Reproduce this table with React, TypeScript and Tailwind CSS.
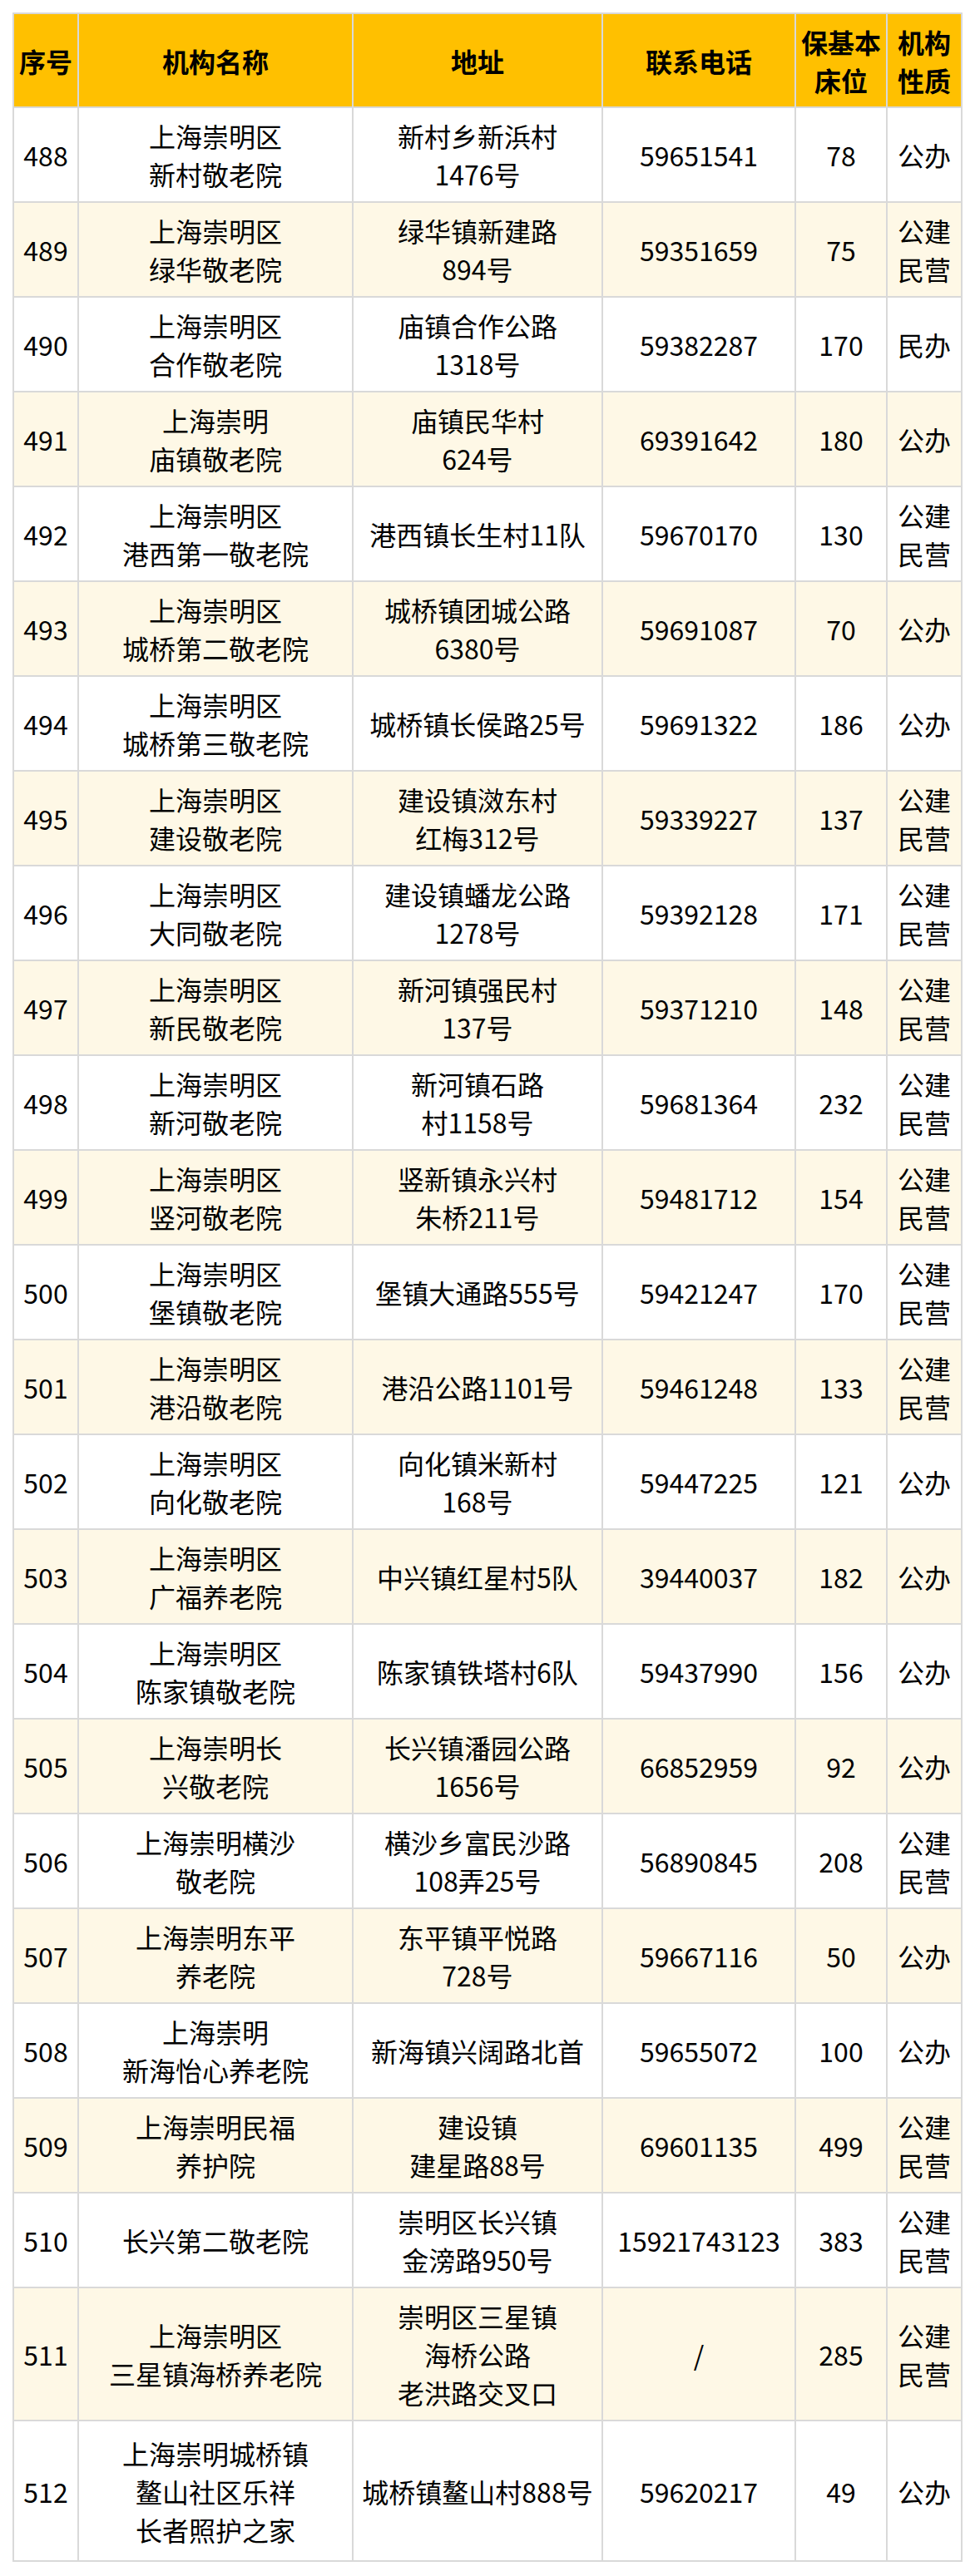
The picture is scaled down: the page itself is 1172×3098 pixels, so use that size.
const headers: string[][] = [['序号'], ['机构名称'], ['地址'], ['联系电话'], ['保基本', '床位'], ['机构', '性质']]

type Row = [string, string[], string[], string, string, string[]]

const 公建民营 = ['公建', '民营']
const 公办 = ['公办']

const rows: Row[] = [
  ['488', ['上海崇明区', '新村敬老院'], ['新村乡新浜村', '1476号'], '59651541', '78', 公办],
  ['489', ['上海崇明区', '绿华敬老院'], ['绿华镇新建路', '894号'], '59351659', '75', 公建民营],
  ['490', ['上海崇明区', '合作敬老院'], ['庙镇合作公路', '1318号'], '59382287', '170', ['民办']],
  ['491', ['上海崇明', '庙镇敬老院'], ['庙镇民华村', '624号'], '69391642', '180', 公办],
  ['492', ['上海崇明区', '港西第一敬老院'], ['港西镇长生村11队'], '59670170', '130', 公建民营],
  ['493', ['上海崇明区', '城桥第二敬老院'], ['城桥镇团城公路', '6380号'], '59691087', '70', 公办],
  ['494', ['上海崇明区', '城桥第三敬老院'], ['城桥镇长侯路25号'], '59691322', '186', 公办],
  ['495', ['上海崇明区', '建设敬老院'], ['建设镇滧东村', '红梅312号'], '59339227', '137', 公建民营],
  ['496', ['上海崇明区', '大同敬老院'], ['建设镇蟠龙公路', '1278号'], '59392128', '171', 公建民营],
  ['497', ['上海崇明区', '新民敬老院'], ['新河镇强民村', '137号'], '59371210', '148', 公建民营],
  ['498', ['上海崇明区', '新河敬老院'], ['新河镇石路', '村1158号'], '59681364', '232', 公建民营],
  ['499', ['上海崇明区', '竖河敬老院'], ['竖新镇永兴村', '朱桥211号'], '59481712', '154', 公建民营],
  ['500', ['上海崇明区', '堡镇敬老院'], ['堡镇大通路555号'], '59421247', '170', 公建民营],
  ['501', ['上海崇明区', '港沿敬老院'], ['港沿公路1101号'], '59461248', '133', 公建民营],
  ['502', ['上海崇明区', '向化敬老院'], ['向化镇米新村', '168号'], '59447225', '121', 公办],
  ['503', ['上海崇明区', '广福养老院'], ['中兴镇红星村5队'], '39440037', '182', 公办],
  ['504', ['上海崇明区', '陈家镇敬老院'], ['陈家镇铁塔村6队'], '59437990', '156', 公办],
  ['505', ['上海崇明长', '兴敬老院'], ['长兴镇潘园公路', '1656号'], '66852959', '92', 公办],
  ['506', ['上海崇明横沙', '敬老院'], ['横沙乡富民沙路', '108弄25号'], '56890845', '208', 公建民营],
  ['507', ['上海崇明东平', '养老院'], ['东平镇平悦路', '728号'], '59667116', '50', 公办],
  ['508', ['上海崇明', '新海怡心养老院'], ['新海镇兴阔路北首'], '59655072', '100', 公办],
  ['509', ['上海崇明民福', '养护院'], ['建设镇', '建星路88号'], '69601135', '499', 公建民营],
  ['510', ['长兴第二敬老院'], ['崇明区长兴镇', '金滂路950号'], '15921743123', '383', 公建民营],
  ['511', ['上海崇明区', '三星镇海桥养老院'], ['崇明区三星镇', '海桥公路', '老洪路交叉口'], '/', '285', 公建民营],
  ['512', ['上海崇明城桥镇', '鳌山社区乐祥', '长者照护之家'], ['城桥镇鳌山村888号'], '59620217', '49', 公办],
]

function Lines({ lines }: { lines: string[] }) {
  return (
    <div className="whitespace-nowrap">
      {lines.map((l, i) => (
        <div key={i}>{l}</div>
      ))}
    </div>
  )
}

export default function App() {
  return (
    <div className="bg-white px-[15px] pt-[15px] pb-[16px] text-black text-[32px] leading-[46px] [font-family:'Noto_Sans_CJK_SC',sans-serif]">
      <div className="grid w-[1142px] grid-cols-[76px_328px_298px_230px_108px_88px] gap-[2px] bg-[#d9d9d9] p-[2px]">
        {/* 表头 */}
        {headers.map((h, i) => (
          <div key={i} className="flex h-[111px] items-center justify-center bg-[#ffc000] text-center font-bold">
            <Lines lines={h} />
          </div>
        ))}

        {/* 数据行 */}
        {rows.map((r, idx) => {
          const bg = idx % 2 === 1 ? 'bg-[#fef8e6]' : 'bg-white'
          const h = r[0] === '512' ? 'min-h-[167px]' : 'min-h-[112px]'
          const cells = [[r[0]], r[1], r[2], [r[3]], [r[4]], r[5]]
          return cells.map((c, j) => (
            <div key={`${idx}-${j}`} className={`flex items-center justify-center py-[10px] text-center ${bg} ${h}`}>
              <Lines lines={c} />
            </div>
          ))
        })}
      </div>
    </div>
  )
}
